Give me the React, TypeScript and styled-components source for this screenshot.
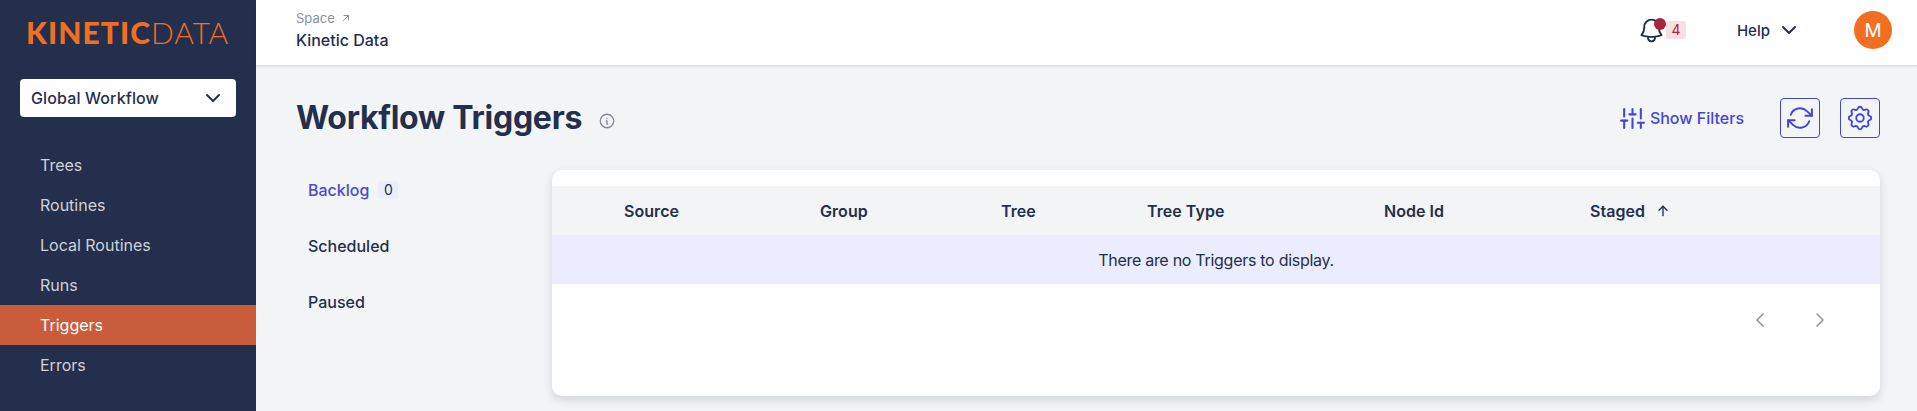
import React from 'react'
import styled, { createGlobalStyle } from 'styled-components'
import { FiRefreshCw, FiSliders } from 'react-icons/fi'
import { HiOutlineBell } from 'react-icons/hi2'
import {
  TbArrowUp,
  TbArrowUpRight,
  TbChevronDown,
  TbChevronLeft,
  TbChevronRight,
  TbInfoCircle,
  TbSettings,
} from 'react-icons/tb'

const GlobalStyle = createGlobalStyle`
  html, body { margin: 0; padding: 0; height: 100%; overflow: hidden; }
  body { font-family: Inter, "Noto Sans", sans-serif; color: #232f4c; background: #f3f4f6; }
  * { box-sizing: border-box; }
`

const Page = styled.div`
  display: flex;
  width: 1917px;
  height: 411px;
  overflow: hidden;
`

const Sidebar = styled.aside`
  width: 256px;
  flex: none;
  background: #232f4c;
  display: flex;
  flex-direction: column;
`

const Logo = styled.div`
  font-family: Lato, sans-serif;
  font-size: 30px;
  line-height: 32px;
  color: #f26f21;
  padding: 16px 0 0 26px;
  height: 79px;
  white-space: nowrap;
`

const LogoBold = styled.span`
  font-weight: 900;
  letter-spacing: 1.1px;
`

const LogoThin = styled.span`
  font-weight: 300;
  letter-spacing: 0.8px;
`

const SpaceSelect = styled.div`
  margin: 0 20px;
  height: 38px;
  background: #fff;
  border-radius: 4px;
  display: flex;
  align-items: center;
  justify-content: space-between;
  padding: 0 11px;
  font-size: 16px;
  font-weight: 500;
  letter-spacing: 0.12px;
`

const NavList = styled.nav`
  margin-top: 28px;
  display: flex;
  flex-direction: column;
`

const NavItem = styled.a<{ $active?: boolean }>`
  height: 40px;
  display: flex;
  align-items: center;
  padding-left: 40px;
  font-size: 16px;
  color: ${({ $active }) => ($active ? '#fff' : '#cfd2d8')};
  background: ${({ $active }) => ($active ? '#c95d3b' : 'transparent')};
`

const Main = styled.div`
  flex: 1;
  min-width: 0;
  display: flex;
  flex-direction: column;
`

const TopBar = styled.header`
  height: 66px;
  flex: none;
  background: #fff;
  border-bottom: 1px solid #dcdee3;
  box-shadow: 0 1px 2px rgba(35, 47, 76, 0.08);
  display: flex;
  align-items: center;
  justify-content: space-between;
  padding: 0 25px 5px 40px;
`

const Crumbs = styled.div`
  display: flex;
  flex-direction: column;
  gap: 4px;
`

const SpaceLabel = styled.div`
  display: flex;
  align-items: center;
  gap: 5px;
  height: 15px;
  font-size: 13px;
  color: #8c90a1;
`

const SpaceName = styled.div`
  font-size: 16px;
  line-height: 20px;
  font-weight: 500;
`

const TopActions = styled.div`
  display: flex;
  align-items: center;
`

const BellWrap = styled.div`
  position: relative;
  width: 22px;
  height: 26px;
  display: flex;
  align-items: center;
  justify-content: center;

  svg {
    flex: none;
  }
`

const BellDot = styled.span`
  position: absolute;
  top: 1px;
  right: -3px;
  width: 12px;
  height: 12px;
  border-radius: 50%;
  background: #a8243a;
`

const BellCount = styled.span`
  width: 20px;
  height: 18px;
  margin-left: 3px;
  border-radius: 3px;
  background: #f9dfe3;
  color: #a8243a;
  font-size: 14px;
  line-height: 18px;
  text-align: center;
`

const Help = styled.div`
  display: flex;
  align-items: center;
  gap: 7px;
  margin-left: 51px;
  font-size: 15px;
  font-weight: 500;
`

const Avatar = styled.div`
  width: 38px;
  height: 38px;
  margin-left: 53px;
  border-radius: 50%;
  background: #f26f21;
  color: #fff;
  display: flex;
  align-items: center;
  justify-content: center;
  font-size: 19px;
  font-weight: 400;
`

const Content = styled.main`
  flex: 1;
  padding: 32px 37px 15px 40px;
  display: flex;
  flex-direction: column;
`

const TitleRow = styled.div`
  height: 40px;
  display: flex;
  align-items: center;
`

const Title = styled.h1`
  margin: 0;
  font-size: 32px;
  line-height: 40px;
  font-weight: 700;
  letter-spacing: -0.27px;
`

const InfoMark = styled.span`
  margin: 6px 0 0 16px;
  display: flex;
  color: #85899b;
`

const TitleActions = styled.div`
  margin-left: auto;
  display: flex;
  align-items: center;
  gap: 20px;
`

const FiltersLink = styled.a`
  display: flex;
  align-items: center;
  gap: 5px;
  margin-right: 16px;
  font-size: 16px;
  font-weight: 500;
  color: #3f48d4;
`

const IconButton = styled.button`
  width: 40px;
  height: 40px;
  padding: 0;
  background: transparent;
  border: 1px solid #3f48d4;
  border-radius: 4px;
  color: #3f48d4;
  display: flex;
  align-items: center;
  justify-content: center;
`

const Body = styled.div`
  flex: 1;
  margin-top: 32px;
  display: flex;
  min-height: 0;
`

const Tabs = styled.div`
  width: 256px;
  flex: none;
  padding: 10px 0 0 12px;
  display: flex;
  flex-direction: column;
  gap: 36px;
`

const Tab = styled.a<{ $active?: boolean }>`
  height: 20px;
  display: flex;
  align-items: center;
  font-size: 16px;
  font-weight: 500;
  color: ${({ $active }) => ($active ? '#4f46d8' : '#232f4c')};
`

const TabCount = styled.span`
  width: 20px;
  height: 18px;
  margin-left: 9px;
  border-radius: 3px;
  background: #ecedfc;
  color: #232f4c;
  font-size: 14px;
  font-weight: 400;
  line-height: 18px;
  text-align: center;
`

const Card = styled.section`
  flex: 1;
  min-width: 0;
  height: 226px;
  padding-top: 16px;
  background: #fff;
  border-radius: 10px;
  box-shadow: 0 4px 10px rgba(35, 47, 76, 0.16);
  display: flex;
  flex-direction: column;
`

const HeaderRow = styled.div`
  height: 49px;
  flex: none;
  padding-left: 72px;
  background: #f3f4f6;
  display: grid;
  grid-template-columns: 196px 181px 146px 237px 206px 1fr;
  align-items: center;
`

const HeaderCell = styled.div`
  display: flex;
  align-items: center;
  gap: 10px;
  font-size: 16px;
  font-weight: 600;
  letter-spacing: 0.05px;
`

const EmptyRow = styled.div`
  height: 49px;
  flex: none;
  background: #ebecfd;
  display: flex;
  align-items: center;
  justify-content: center;
  font-size: 16px;
  letter-spacing: -0.28px;
`

const Pager = styled.div`
  display: flex;
  justify-content: flex-end;
  gap: 36px;
  padding: 24px 48px 0 0;
  color: #8c90a1;
`

const columns = ['Source', 'Group', 'Tree', 'Tree Type', 'Node Id']
const navItems = ['Trees', 'Routines', 'Local Routines', 'Runs', 'Triggers', 'Errors']

export default function App() {
  return (
    <Page>
      <GlobalStyle />
      <Sidebar>
        <Logo>
          <LogoBold>KINETIC</LogoBold>
          <LogoThin>DATA</LogoThin>
        </Logo>
        <SpaceSelect>
          Global Workflow
          <TbChevronDown size={24} strokeWidth={2} />
        </SpaceSelect>
        <NavList>
          {navItems.map(item => (
            <NavItem key={item} $active={item === 'Triggers'}>{item}</NavItem>
          ))}
        </NavList>
      </Sidebar>
      <Main>
        <TopBar>
          <Crumbs>
            <SpaceLabel>
              Space
              <TbArrowUpRight size={12} strokeWidth={2} />
            </SpaceLabel>
            <SpaceName>Kinetic Data</SpaceName>
          </Crumbs>
          <TopActions>
            <BellWrap>
              <HiOutlineBell size={29} strokeWidth={1.6} />
              <BellDot />
            </BellWrap>
            <BellCount>4</BellCount>
            <Help>
              Help
              <TbChevronDown size={24} strokeWidth={2} />
            </Help>
            <Avatar>M</Avatar>
          </TopActions>
        </TopBar>
        <Content>
          <TitleRow>
            <Title>Workflow Triggers</Title>
            <InfoMark><TbInfoCircle size={18} strokeWidth={1.75} /></InfoMark>
            <TitleActions>
              <FiltersLink>
                <FiSliders size={25} strokeWidth={2} />
                Show Filters
              </FiltersLink>
              <IconButton><FiRefreshCw size={26} strokeWidth={1.8} /></IconButton>
              <IconButton><TbSettings size={30} strokeWidth={1.5} /></IconButton>
            </TitleActions>
          </TitleRow>
          <Body>
            <Tabs>
              <Tab $active>Backlog<TabCount>0</TabCount></Tab>
              <Tab>Scheduled</Tab>
              <Tab>Paused</Tab>
            </Tabs>
            <Card>
              <HeaderRow>
                {columns.map(col => <HeaderCell key={col}>{col}</HeaderCell>)}
                <HeaderCell>Staged <TbArrowUp size={16} strokeWidth={2} /></HeaderCell>
              </HeaderRow>
              <EmptyRow>There are no Triggers to display.</EmptyRow>
              <Pager>
                <TbChevronLeft size={24} strokeWidth={1.5} />
                <TbChevronRight size={24} strokeWidth={1.5} />
              </Pager>
            </Card>
          </Body>
        </Content>
      </Main>
    </Page>
  )
}
